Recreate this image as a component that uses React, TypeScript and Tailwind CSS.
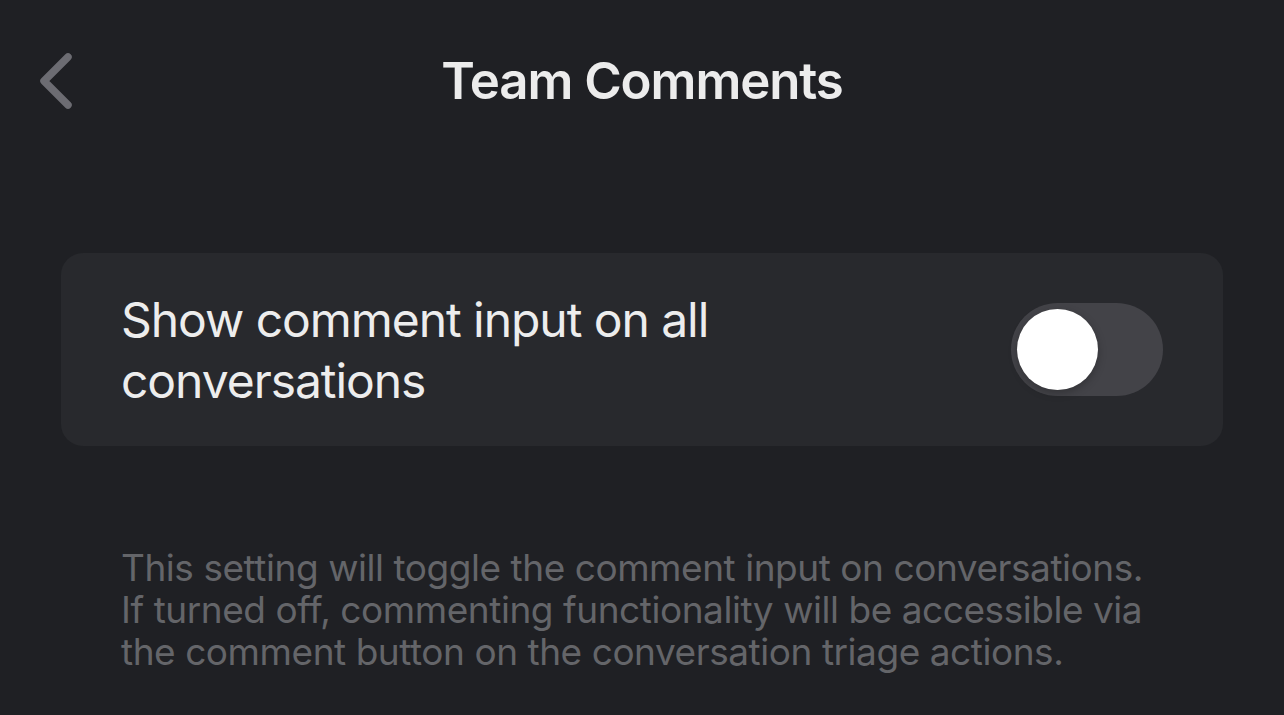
import React, { useState } from 'react';

export default function App() {
  const [enabled, setEnabled] = useState(false);

  return (
    <div className="min-h-screen w-full bg-[#1f2024] font-['Inter','Noto_Sans',sans-serif] text-[#ececec]">
      {/* Header */}
      <div className="grid h-[162px] grid-cols-[1fr_auto_1fr] items-center px-[36px]">
        <button className="flex h-[60px] w-[44px] items-center justify-start">
          <svg width="40" height="60" viewBox="0 0 40 60" fill="none">
            <path d="M32 6 L8 30 L32 54" stroke="#6c6c72" strokeWidth="7.5" strokeLinecap="round" strokeLinejoin="round" />
          </svg>
        </button>
        <div className="text-[51px] font-semibold tracking-[-1.1px] text-[#ececec]">Team Comments</div>
        <div />
      </div>

      {/* Setting card */}
      <div className="mx-[61px] mt-[91px] flex h-[193px] items-center justify-between rounded-[22px] bg-[#28292d] pl-[60px] pr-[60px]">
        <div className="max-w-[720px] text-[48px] leading-[61px] tracking-[-1.05px] text-[#ededed]">
          Show comment input on all conversations
        </div>
        <button
          onClick={() => setEnabled(!enabled)}
          className={`flex h-[93px] w-[152px] shrink-0 items-center rounded-full px-[6px] ${enabled ? 'justify-end bg-[#34c759]' : 'justify-start bg-[#434348]'}`}
        >
          <div className="h-[81px] w-[81px] rounded-full bg-white shadow-[0_3px_8px_rgba(0,0,0,0.25)]" />
        </button>
      </div>

      {/* Description */}
      <div className="mt-[101px] whitespace-nowrap px-[121px] text-[37px] leading-[42px] tracking-[-0.45px] text-[#646569]">
        This setting will toggle the comment input on conversations.
        <br />
        If turned off, commenting functionality will be accessible via
        <br />
        the comment button on the conversation triage actions.
      </div>
    </div>
  );
}
